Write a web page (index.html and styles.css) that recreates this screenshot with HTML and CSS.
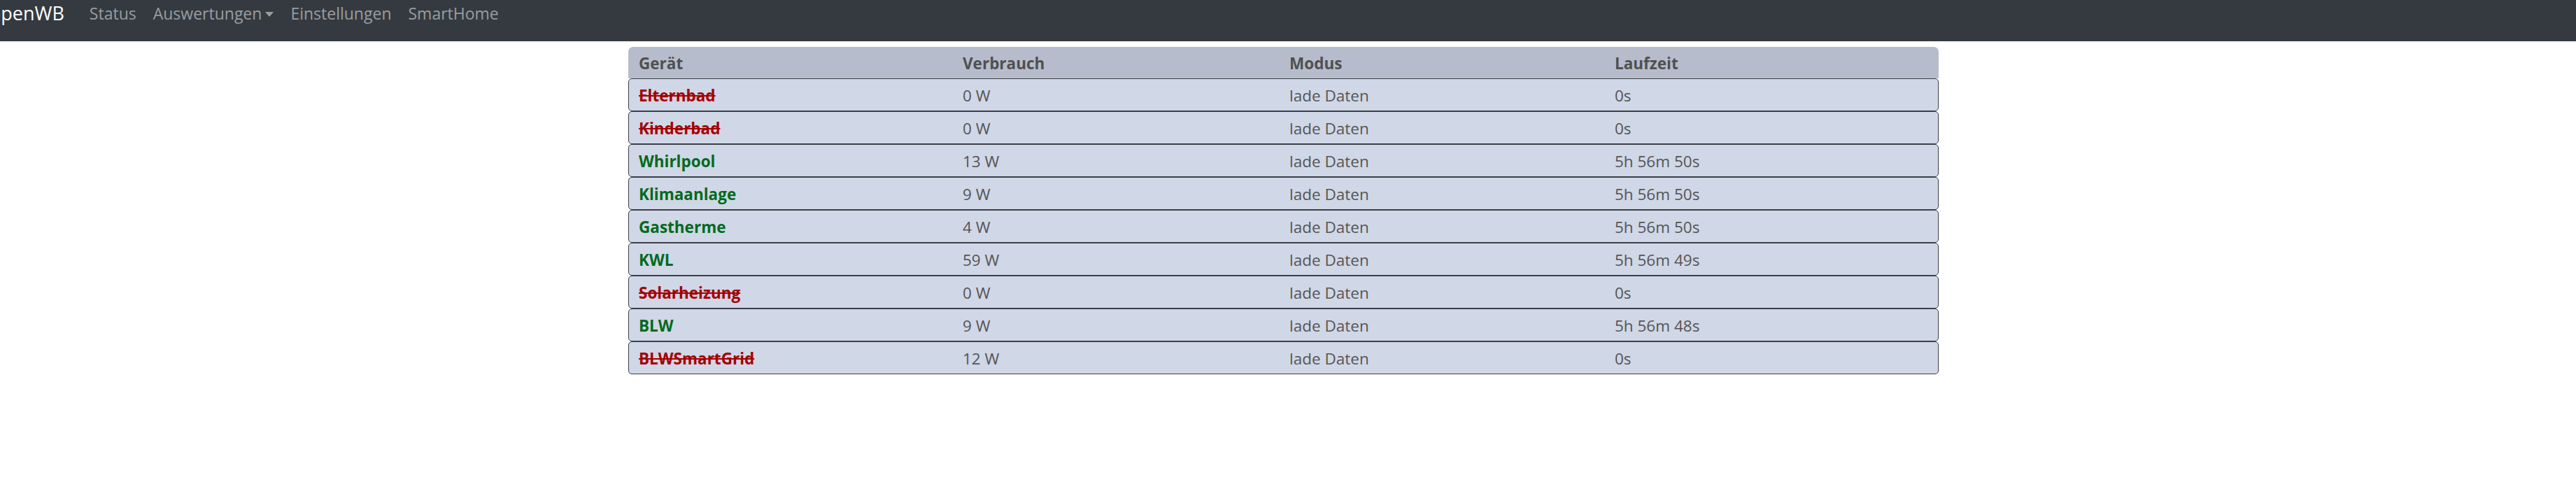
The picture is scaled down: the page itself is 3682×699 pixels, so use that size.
FILE: index.html
```html
<!DOCTYPE html>
<html lang="de">
<head>
<meta charset="utf-8">
<title>openWB SmartHome</title>
<link rel="stylesheet" href="styles.css">
</head>
<body>
<nav class="navbar">
  <span class="brand">openWB</span>
  <ul class="nav">
    <li class="nav-link">Status</li>
    <li class="nav-link dropdown">Auswertungen<span class="caret"></span></li>
    <li class="nav-link">Einstellungen</li>
    <li class="nav-link">SmartHome</li>
  </ul>
</nav>
<main class="content">
  <div class="devices">
    <div class="row head">
      <div class="cell">Gerät</div>
      <div class="cell">Verbrauch</div>
      <div class="cell">Modus</div>
      <div class="cell">Laufzeit</div>
    </div>
    <div class="row">
      <div class="cell name off">Elternbad</div>
      <div class="cell">0 W</div>
      <div class="cell">lade Daten</div>
      <div class="cell">0s</div>
    </div>
    <div class="row">
      <div class="cell name off">Kinderbad</div>
      <div class="cell">0 W</div>
      <div class="cell">lade Daten</div>
      <div class="cell">0s</div>
    </div>
    <div class="row">
      <div class="cell name on">Whirlpool</div>
      <div class="cell">13 W</div>
      <div class="cell">lade Daten</div>
      <div class="cell">5h 56m 50s</div>
    </div>
    <div class="row">
      <div class="cell name on">Klimaanlage</div>
      <div class="cell">9 W</div>
      <div class="cell">lade Daten</div>
      <div class="cell">5h 56m 50s</div>
    </div>
    <div class="row">
      <div class="cell name on">Gastherme</div>
      <div class="cell">4 W</div>
      <div class="cell">lade Daten</div>
      <div class="cell">5h 56m 50s</div>
    </div>
    <div class="row">
      <div class="cell name on">KWL</div>
      <div class="cell">59 W</div>
      <div class="cell">lade Daten</div>
      <div class="cell">5h 56m 49s</div>
    </div>
    <div class="row">
      <div class="cell name off">Solarheizung</div>
      <div class="cell">0 W</div>
      <div class="cell">lade Daten</div>
      <div class="cell">0s</div>
    </div>
    <div class="row">
      <div class="cell name on">BLW</div>
      <div class="cell">9 W</div>
      <div class="cell">lade Daten</div>
      <div class="cell">5h 56m 48s</div>
    </div>
    <div class="row">
      <div class="cell name off">BLWSmartGrid</div>
      <div class="cell">12 W</div>
      <div class="cell">lade Daten</div>
      <div class="cell">0s</div>
    </div>
  </div>
</main>
</body>
</html>
```
FILE: styles.css
```css
html, body {
  margin: 0;
  padding: 0;
  background: #ffffff;
  font-family: "Open Sans", "Noto Sans", "Liberation Sans", sans-serif;
  font-size: 22.5px;
  color: #555555;
  overflow: hidden;
}

.navbar {
  height: 59px;
  background: #343a40;
  display: flex;
  align-items: flex-start;
  padding-top: 2px;
  box-sizing: border-box;
  overflow: hidden;
}

.brand {
  color: #ffffff;
  font-size: 27px;
  line-height: 34px;
  margin-left: -15px;
  margin-right: 24px;
  white-space: nowrap;
}

.nav {
  display: flex;
  list-style: none;
  margin: 0;
  padding: 0;
}

.nav-link {
  color: rgba(255, 255, 255, 0.5);
  font-size: 23px;
  padding: 0 12px;
  line-height: 34px;
  white-space: nowrap;
  display: flex;
  align-items: center;
}

.caret {
  display: inline-block;
  width: 0;
  height: 0;
  margin-left: 5px;
  margin-top: 2px;
  border-left: 6px solid transparent;
  border-right: 6px solid transparent;
  border-top: 7px solid rgba(255, 255, 255, 0.5);
}

.content {
  padding-top: 8px;
}

.devices {
  width: 1873px;
  margin-left: 898px;
  display: flex;
  flex-direction: column;
}

.row {
  display: grid;
  grid-template-columns: 463px 467px 465px 1fr;
  height: 47px;
  box-sizing: border-box;
  background: #d0d7e6;
  border: 1px solid #3a3f47;
  border-radius: 5px;
  align-items: center;
}

.row.head {
  height: 45px;
  background: #b6bccb;
  border: 0 solid transparent;
  border-left-width: 1px;
  border-right-width: 1px;
  border-radius: 7px 7px 0 0;
  font-weight: 700;
  color: #505050;
}

.cell {
  padding: 2px 14px 0;
  white-space: nowrap;
  line-height: 30px;
}

.name {
  font-weight: 700;
}

.name.off {
  color: #a50000;
  text-decoration: line-through;
}

.name.on {
  color: #006a1c;
}
```
